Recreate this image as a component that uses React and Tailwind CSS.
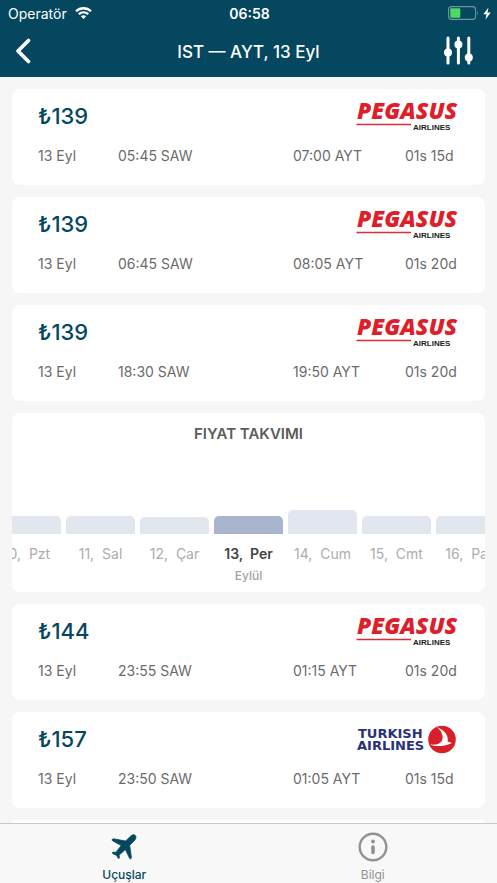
const flightsBefore = [
  { id: 1, price: "₺139", date: "13 Eyl", departure: "05:45 SAW", arrival: "07:00 AYT", duration: "01s 15d", airline: "pegasus" },
  { id: 2, price: "₺139", date: "13 Eyl", departure: "06:45 SAW", arrival: "08:05 AYT", duration: "01s 20d", airline: "pegasus" },
  { id: 3, price: "₺139", date: "13 Eyl", departure: "18:30 SAW", arrival: "19:50 AYT", duration: "01s 20d", airline: "pegasus" },
];

const flightsAfter = [
  { id: 4, price: "₺144", date: "13 Eyl", departure: "23:55 SAW", arrival: "01:15 AYT", duration: "01s 20d", airline: "pegasus" },
  { id: 5, price: "₺157", date: "13 Eyl", departure: "23:50 SAW", arrival: "01:05 AYT", duration: "01s 15d", airline: "turkish" },
];

const days = [
  { label: "10,  Pzt", height: 18 },
  { label: "11,  Sal", height: 18 },
  { label: "12,  Çar", height: 17 },
  { label: "13,  Per", height: 18, month: "Eylül", selected: true },
  { label: "14,  Cum", height: 24 },
  { label: "15,  Cmt", height: 18 },
  { label: "16,  Paz", height: 18 },
];

function PegasusLogo() {
  return (
    <svg width="104" height="38" viewBox="0 0 104 38" className="overflow-visible" role="img" aria-label="Pegasus Airlines">
      <text x="0" y="24" fill="#dc1f2b" fontFamily="'Open Sans', sans-serif" fontSize="23" fontWeight="800" fontStyle="italic">
        PEGASUS
      </text>
      <path d="M-.5 29.500H54" stroke="#dc2b35" strokeWidth="1.600" />
      <text x="56" y="35" fill="#1c1c1c" fontFamily="'Liberation Sans', sans-serif" fontSize="8" fontWeight="700">
        AIRLINES
      </text>
    </svg>
  );
}

function TurkishLogo() {
  return (
    <svg width="104" height="38" viewBox="0 0 104 38" role="img" aria-label="Turkish Airlines">
      <g fill="#28327c" fontFamily="'DejaVu Sans', sans-serif" fontSize="13" fontWeight="700">
        <text x="1" y="20">TURKISH</text>
        <text x="0" y="32">AIRLINES</text>
      </g>
      <circle cx="85" cy="21.500" r="13.800" fill="#d81f2a" />
      <path d="M73 26.500C78 27 83 26.500 85 22.500C87 18 84 12.500 80 9C88 12.500 92 18 90.500 23.500L95 25C90 27.500 85 28 81 28C78 28 75.500 27.500 73 26.500Z" fill="#fff" />
    </svg>
  );
}

function StatusBar() {
  return (
    <div className="grid h-6 grid-cols-3 items-center pt-0.5 pr-1.5 pl-2">
      <div className="flex items-center gap-2 text-[14px]">
        <span>Operatör</span>
        <svg width="17" height="12" viewBox="0 0 17 12" fill="none" stroke="#fff" strokeWidth="2.300">
          <path d="M1 4.300C5.200.200 11.800.200 16 4.300" />
          <path d="M3.800 7.200C6.500 4.700 10.500 4.700 13.200 7.200" />
          <path d="M8.500 12L5.900 9.300C7.400 8 9.600 8 11.100 9.300Z" fill="#fff" stroke="none" />
        </svg>
      </div>
      <span className="text-center text-[14px] font-semibold">06:58</span>
      <div className="flex items-center justify-end gap-1">
        <svg width="31" height="14" viewBox="0 0 31 14">
          <rect x=".6" y=".6" width="27" height="12.800" rx="3" fill="none" stroke="#7295a4" strokeWidth="1.100" />
          <rect x="2.300" y="2.300" width="10" height="9.400" rx="1" fill="#4cd964" />
          <path d="M29 4.800Q30.800 7 29 9.200Z" fill="#7295a4" />
        </svg>
        <svg width="8" height="13" viewBox="0 0 8 13" fill="#fff">
          <path d="M5.500.500L.300 7.300H3.500L2.500 12.500L7.700 5.500H4.500Z" />
        </svg>
      </div>
    </div>
  );
}

function Header() {
  return (
    <header className="h-[77px] shrink-0 bg-[#05475f] text-white">
      <StatusBar />
      <div className="grid grid-cols-[64px_1fr_64px] items-center pt-3">
        <button type="button" aria-label="Geri" className="pl-3.5">
          <svg width="18" height="28" viewBox="0 0 18 28" fill="none" stroke="#fff" strokeWidth="3.800" strokeLinecap="round" strokeLinejoin="round">
            <path d="M14.500 3.500L4 14L14.500 24.500" />
          </svg>
        </button>
        <h1 className="pt-0.5 text-center text-[17px] leading-6 font-medium">IST — AYT, 13 Eyl</h1>
        <button type="button" aria-label="Filtrele" className="flex justify-end pr-6">
          <svg width="29" height="29" viewBox="0 0 29 29" fill="#fff" stroke="#fff" strokeWidth="3" strokeLinecap="round">
            <path d="M4 2V27M14.400 2V27M24.800 2V27" />
            <circle cx="4" cy="16.500" r="4" stroke="none" />
            <circle cx="14.400" cy="8.500" r="4" stroke="none" />
            <circle cx="24.800" cy="21.500" r="4" stroke="none" />
          </svg>
        </button>
      </div>
    </header>
  );
}

function FlightCard({ flight }) {
  return (
    <article className="h-24 rounded-lg bg-white pl-[26px]">
      <div className="flex items-start justify-between pt-1.5 pr-6">
        <p className="pt-[5px] text-[22px] leading-8 font-medium text-[#05475f]">{flight.price}</p>
        {flight.airline === "pegasus" ? <PegasusLogo /> : <TurkishLogo />}
      </div>
      <div className="grid grid-cols-[80px_1fr_112px_80px] pt-[13px] text-[14px] leading-5 text-[#6b6b6b]">
        <span>{flight.date}</span>
        <span>{flight.departure}</span>
        <span>{flight.arrival}</span>
        <span>{flight.duration}</span>
      </div>
    </article>
  );
}

function PriceCalendar() {
  return (
    <section className="h-[179px] overflow-hidden rounded-lg bg-white">
      <h2 className="pt-[11px] text-center text-[15px] leading-5 font-semibold text-[#5c5c5c]">FIYAT TAKVIMI</h2>
      <div className="flex justify-center gap-[5px] pt-[57px]">
        {days.map((day) => (
          <button key={day.label} type="button" className="flex w-[69px] shrink-0 flex-col items-center">
            <span className="flex h-[33px] w-full items-end">
              <span
                className={`w-full rounded-t-[5px] ${day.selected ? "bg-[#a9b5cf]" : "bg-[#e1e6ef]"}`}
                style={{ height: day.height }}
              />
            </span>
            <span
              className={`pt-2.5 text-[14px] leading-5 whitespace-pre ${day.selected ? "font-semibold text-[#444]" : "text-[#adadad]"}`}
            >
              {day.label}
            </span>
            {day.month && <span className="pt-1 text-[12px] leading-4 font-medium text-[#a3a3a3]">{day.month}</span>}
          </button>
        ))}
      </div>
    </section>
  );
}

function TabBar() {
  return (
    <nav className="grid h-[60px] shrink-0 grid-cols-2 border-t border-[#c8c8c8] bg-[#f8f8f8] text-[12px] leading-4">
      <a href="#ucuslar" aria-current="page" className="flex flex-col items-center gap-[5px] pt-2 font-medium text-[#05475f]">
        <svg width="30" height="30" viewBox="0 0 30 30" fill="currentColor" stroke="currentColor" strokeWidth=".8" strokeLinejoin="round">
          <path d="M26.300 3.400C25.100 2.300 22.900 2.800 21.300 4.400L16.700 9L4.400 6.800C3.400 6.700 2.600 8.100 3.500 8.700L12.200 13.600L8.600 18.100C7.800 19.100 7.300 19.800 7 20.500L4.300 20.100C3.200 20.200 3 21.200 3.900 21.700L7.500 23.300L9.100 26C9.600 26.800 10.500 26.500 10.400 25.500L10 22.900C10.700 22.500 11.400 22 12.300 21.200L16.300 17.500L20.600 26.300C21.100 27.200 22.400 26.800 22.400 25.700L20.700 13.300L25.300 8.700C26.900 7.100 27.400 4.600 26.300 3.400Z" />
        </svg>
        Uçuşlar
      </a>
      <a href="#bilgi" className="flex flex-col items-center gap-[5px] pt-2 text-[#929292]">
        <svg width="30" height="30" viewBox="0 0 30 30" fill="none" stroke="currentColor" strokeWidth="2.400">
          <circle cx="15" cy="15" r="13.300" />
          <circle cx="15" cy="9.500" r="1.900" fill="currentColor" stroke="none" />
          <path d="M15 15V20.500" strokeWidth="3.600" strokeLinecap="round" />
        </svg>
        Bilgi
      </a>
    </nav>
  );
}

function App() {
  return (
    <div className="flex h-screen flex-col bg-[#f6f6f6] font-['Inter',sans-serif]">
      <Header />
      <main className="min-h-0 flex-1 space-y-3 overflow-y-auto px-3 pt-3 [scrollbar-width:none]">
        {flightsBefore.map((flight) => (
          <FlightCard key={flight.id} flight={flight} />
        ))}
        <PriceCalendar />
        {flightsAfter.map((flight) => (
          <FlightCard key={flight.id} flight={flight} />
        ))}
        <div className="h-1 overflow-hidden rounded-t-lg bg-white" />
      </main>
      <TabBar />
    </div>
  );
}

export default App;
